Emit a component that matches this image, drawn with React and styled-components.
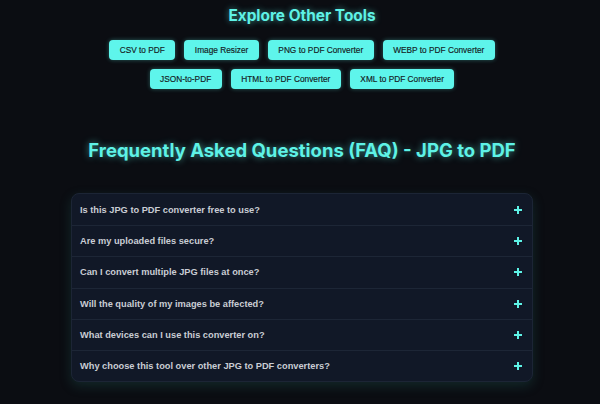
import React from "react";
import styled, { createGlobalStyle } from "styled-components";

const Global = createGlobalStyle`
  html, body { margin: 0; padding: 0; background: #0b0d12; }
  body { font-family: "Liberation Sans", Arial, sans-serif; }
  * { box-sizing: border-box; }
`;

const Page = styled.div`
  width: 600px;
  height: 404px;
  overflow: hidden;
  background: #0b0d12;
  padding-left: 4px;
  display: flex;
  flex-direction: column;
  align-items: center;
`;

const ToolsTitle = styled.h2`
  margin: 6px 0 0;
  font-family: Inter, "Noto Sans", sans-serif;
  font-size: 15.4px;
  line-height: 19px;
  font-weight: 700;
  color: #5ef2e6;
  text-shadow: 0 0 6px rgba(94, 242, 230, 0.6);
`;

const ToolGrid = styled.div`
  margin-top: 15px;
  display: flex;
  flex-wrap: wrap;
  justify-content: center;
  gap: 9px 9px;
  width: 400px;
`;

const ToolButton = styled.a`
  height: 20px;
  padding: 0 10.5px;
  display: inline-flex;
  align-items: center;
  background: #5ef5eb;
  color: #141a22;
  border-radius: 4px;
  font-size: 8.3px;
  font-weight: 400;
  -webkit-text-stroke: 0.15px #141a22;
  text-decoration: none;
  box-shadow: 0 0 4px rgba(94, 245, 235, 0.35);
`;

const FaqTitle = styled.h2`
  margin: 49px 0 0;
  font-family: Inter, "Noto Sans", sans-serif;
  font-size: 18.5px;
  line-height: 24px;
  font-weight: 700;
  color: #5ef2e6;
  text-shadow: 0 0 7px rgba(94, 242, 230, 0.6);
`;

const FaqCard = styled.div`
  margin-top: 31px;
  width: 462px;
  background: #111827;
  border: 1px solid #1c2535;
  border-radius: 8px;
  box-shadow: 0 4px 12px rgba(40, 120, 110, 0.25);
  overflow: hidden;
`;

const FaqRow = styled.div`
  height: 31.2px;
  display: flex;
  align-items: center;
  justify-content: space-between;
  padding: 0 10px 0 8px;
  border-top: ${(p) => (p.$first ? "none" : "1px solid #1d2636")};
`;

const Question = styled.span`
  font-size: 9.25px;
  font-weight: 700;
  color: #c9cdd4;
`;

const Plus = styled.svg`
  width: 8px;
  height: 8px;
  flex: none;
`;

const tools = [
  "CSV to PDF",
  "Image Resizer",
  "PNG to PDF Converter",
  "WEBP to PDF Converter",
  "JSON-to-PDF",
  "HTML to PDF Converter",
  "XML to PDF Converter",
];

const faqs = [
  "Is this JPG to PDF converter free to use?",
  "Are my uploaded files secure?",
  "Can I convert multiple JPG files at once?",
  "Will the quality of my images be affected?",
  "What devices can I use this converter on?",
  "Why choose this tool over other JPG to PDF converters?",
];

export default function App() {
  return (
    <Page>
      <Global />
      <ToolsTitle>Explore Other Tools</ToolsTitle>
      <ToolGrid>
        {tools.map((t) => (
          <ToolButton key={t}>{t}</ToolButton>
        ))}
      </ToolGrid>
      <FaqTitle>Frequently Asked Questions (FAQ) - JPG to PDF</FaqTitle>
      <FaqCard>
        {faqs.map((q, i) => (
          <FaqRow key={q} $first={i === 0}>
            <Question>{q}</Question>
            <Plus viewBox="0 0 8 8">
              <path d="M4 0v8M0 4h8" stroke="#5ef2e6" strokeWidth="2" />
            </Plus>
          </FaqRow>
        ))}
      </FaqCard>
    </Page>
  );
}
